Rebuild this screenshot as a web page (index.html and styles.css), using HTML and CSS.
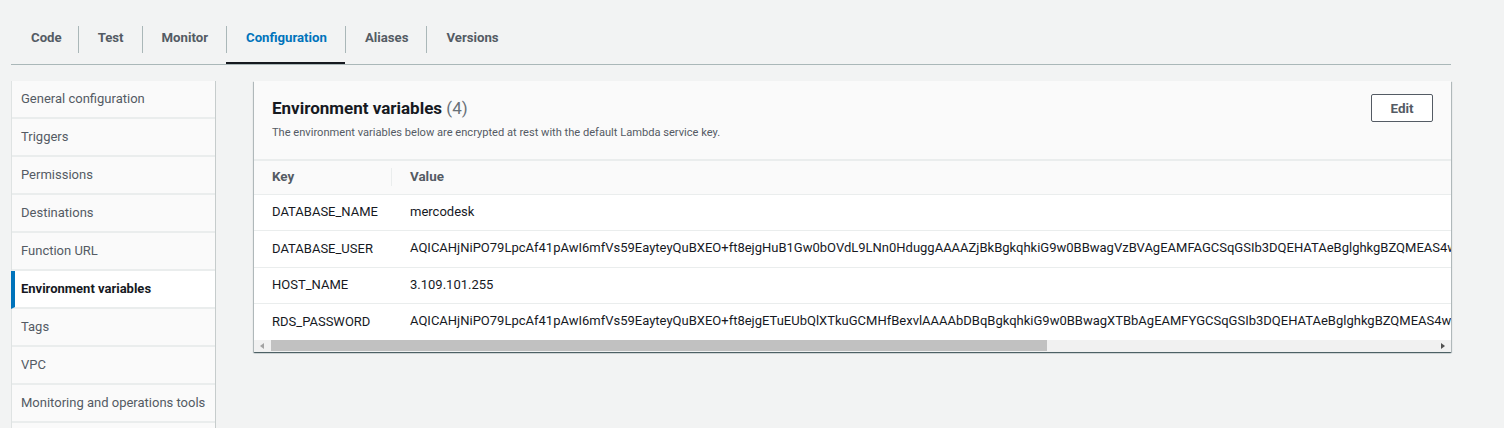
FILE: index.html
```html
<!DOCTYPE html>
<html>
<head>
<meta charset="utf-8">
<link rel="stylesheet" href="styles.css">
</head>
<body>
<div class="page">
  <nav class="tabs">
    <a class="tab">Code</a>
    <a class="tab">Test</a>
    <a class="tab">Monitor</a>
    <a class="tab active">Configuration</a>
    <a class="tab">Aliases</a>
    <a class="tab">Versions</a>
  </nav>
  <div class="layout">
    <ul class="side">
      <li class="side-item">General configuration</li>
      <li class="side-item">Triggers</li>
      <li class="side-item">Permissions</li>
      <li class="side-item">Destinations</li>
      <li class="side-item">Function URL</li>
      <li class="side-item active">Environment variables</li>
      <li class="side-item">Tags</li>
      <li class="side-item">VPC</li>
      <li class="side-item">Monitoring and operations tools</li>
      <li class="side-item">Concurrency</li>
    </ul>
    <section class="panel">
      <header class="panel-head">
        <div class="panel-titles">
          <h2 class="panel-title">Environment variables <span class="count">(4)</span></h2>
          <p class="panel-desc">The environment variables below are encrypted at rest with the default Lambda service key.</p>
        </div>
        <button class="btn">Edit</button>
      </header>
      <div class="vars">
        <div class="row head">
          <div class="cell key">Key</div>
          <div class="cell val"><span class="sep"></span>Value</div>
        </div>
        <div class="row">
          <div class="cell key">DATABASE_NAME</div>
          <div class="cell val">mercodesk</div>
        </div>
        <div class="row tall">
          <div class="cell key">DATABASE_USER</div>
          <div class="cell val">AQICAHjNiPO79LpcAf41pAwI6mfVs59EayteyQuBXEO+ft8ejgHuB1Gw0bOVdL9LNn0HduggAAAAZjBkBgkqhkiG9w0BBwagVzBVAgEAMFAGCSqGSIb3DQEHATAeBglghkgBZQMEAS4wEQQMx7kTqZc2LhYvR0aPAgEQgCiXmNq</div>
        </div>
        <div class="row">
          <div class="cell key">HOST_NAME</div>
          <div class="cell val">3.109.101.255</div>
        </div>
        <div class="row last">
          <div class="cell key">RDS_PASSWORD</div>
          <div class="cell val">AQICAHjNiPO79LpcAf41pAwI6mfVs59EayteyQuBXEO+ft8ejgETuEUbQlXTkuGCMHfBexvlAAAAbDBqBgkqhkiG9w0BBwagXTBbAgEAMFYGCSqGSIb3DQEHATAeBglghkgBZQMEAS4wEQQMn3pVb8kWqJtY2cFdAgEQgC5k</div>
        </div>
      </div>
      <div class="hscroll">
        <span class="arrow arrow-left"></span>
        <div class="track"><div class="thumb"></div></div>
        <span class="arrow arrow-right"></span>
      </div>
    </section>
  </div>
</div>
</body>
</html>
```
FILE: styles.css
```css
* { box-sizing: border-box; }
html, body { margin: 0; padding: 0; }
body {
  background: #f2f3f3;
  font-family: Roboto, "Liberation Sans", sans-serif;
  font-size: 13px;
  color: #16191f;
  overflow: hidden;
  height: 428px;
}
.page {
  padding: 26px 0 0 11px;
  width: 1451px;
}

/* Tabs */
.tabs {
  display: flex;
  border-bottom: 1px solid #aab7b8;
  height: 39px;
}
.tab {
  position: relative;
  display: block;
  padding: 0 18px 0 20px;
  height: 38px;
  line-height: 23px;
  font-weight: 700;
  font-size: 13.2px;
  color: #545b64;
  border-bottom: 2px solid transparent;
}
.tab + .tab::before {
  content: "";
  position: absolute;
  left: 0;
  top: 0;
  height: 27px;
  width: 1px;
  background: #aab7b8;
}
.tab:first-child { padding-left: 20px; padding-right: 16px; }
.tab.active {
  color: #0073bb;
  border-bottom-color: #16191f;
}

/* Layout */
.layout {
  display: flex;
  gap: 38px;
  margin-top: 16px;
  align-items: flex-start;
}

/* Side menu */
.side {
  list-style: none;
  margin: 0;
  padding: 0;
  width: 205px;
  flex: none;
  background: #eaeded;
  border-left: 1px solid #dfe3e3;
  border-right: 1px solid #c6cccc;
}
.side-item {
  height: 38px;
  line-height: 36px;
  padding-left: 9px;
  background: #fafafa;
  border-bottom: 2px solid #eaeded;
  color: #545b64;
  white-space: nowrap;
}
.side-item.active {
  background: #fff;
  color: #16191f;
  font-weight: 700;
  border-left: 4px solid #0073bb;
  margin-left: -1px;
  padding-left: 6px;
}

/* Panel */
.panel {
  flex: none;
  width: 1197px;
  background: #fff;
  box-shadow: 0 1px 1px 0 rgba(0, 28, 36, 0.5), 1px 1px 1px 0 rgba(0, 28, 36, 0.2), -1px 1px 1px 0 rgba(0, 28, 36, 0.2);
  overflow: hidden;
}
.panel-head {
  display: flex;
  justify-content: space-between;
  align-items: flex-start;
  background: #fafafa;
  height: 80px;
  padding: 16px 18px 0 18px;
  border-bottom: 2px solid #eaeded;
}
.panel-title {
  margin: 0;
  font-size: 17px;
  line-height: 22px;
  font-weight: 700;
  color: #16191f;
}
.count {
  font-weight: 400;
  color: #687078;
}
.panel-desc {
  margin: 6px 0 0 0;
  font-size: 11.1px;
  line-height: 16px;
  color: #545b64;
}
.btn {
  margin-top: -3px;
  width: 62px;
  height: 28px;
  background: #fff;
  border: 1px solid #545b64;
  border-radius: 2px;
  font-family: inherit;
  font-weight: 700;
  font-size: 13.4px;
  color: #545b64;
  padding: 0;
}

/* Table */
.vars {
  overflow: hidden;
}
.row {
  display: flex;
  align-items: center;
  height: 36px;
  padding-bottom: 2px;
  border-bottom: 1px solid #eaeded;
  white-space: nowrap;
}
.row.tall { height: 37px; }
.row.last { border-bottom: none; height: 36px; }
.row.head {
  height: 34px;
  background: #fafafa;
  font-weight: 700;
  font-size: 13.4px;
  color: #545b64;
}
.cell { flex: none; }
.cell.key {
  width: 137px;
  padding-left: 18px;
}
.cell.val {
  position: relative;
  padding-left: 19px;
  line-height: 20px;
}
.sep {
  position: absolute;
  left: 0;
  top: 1px;
  height: 18px;
  width: 1px;
  background: #eaeded;
}

/* Fake horizontal scrollbar */
.hscroll {
  display: flex;
  align-items: center;
  height: 12px;
  background: #f1f1f1;
}
.arrow {
  flex: none;
  width: 17px;
  height: 12px;
  position: relative;
}
.arrow::after {
  content: "";
  position: absolute;
  top: 3px;
  border-top: 3px solid transparent;
  border-bottom: 3px solid transparent;
}
.arrow-left::after {
  left: 6px;
  border-right: 4px solid #a3a3a3;
}
.arrow-right::after {
  left: 7px;
  border-left: 4px solid #505050;
}
.track {
  flex: 1;
  height: 12px;
}
.thumb {
  width: 776px;
  height: 11px;
  background: #c1c1c1;
}
```
